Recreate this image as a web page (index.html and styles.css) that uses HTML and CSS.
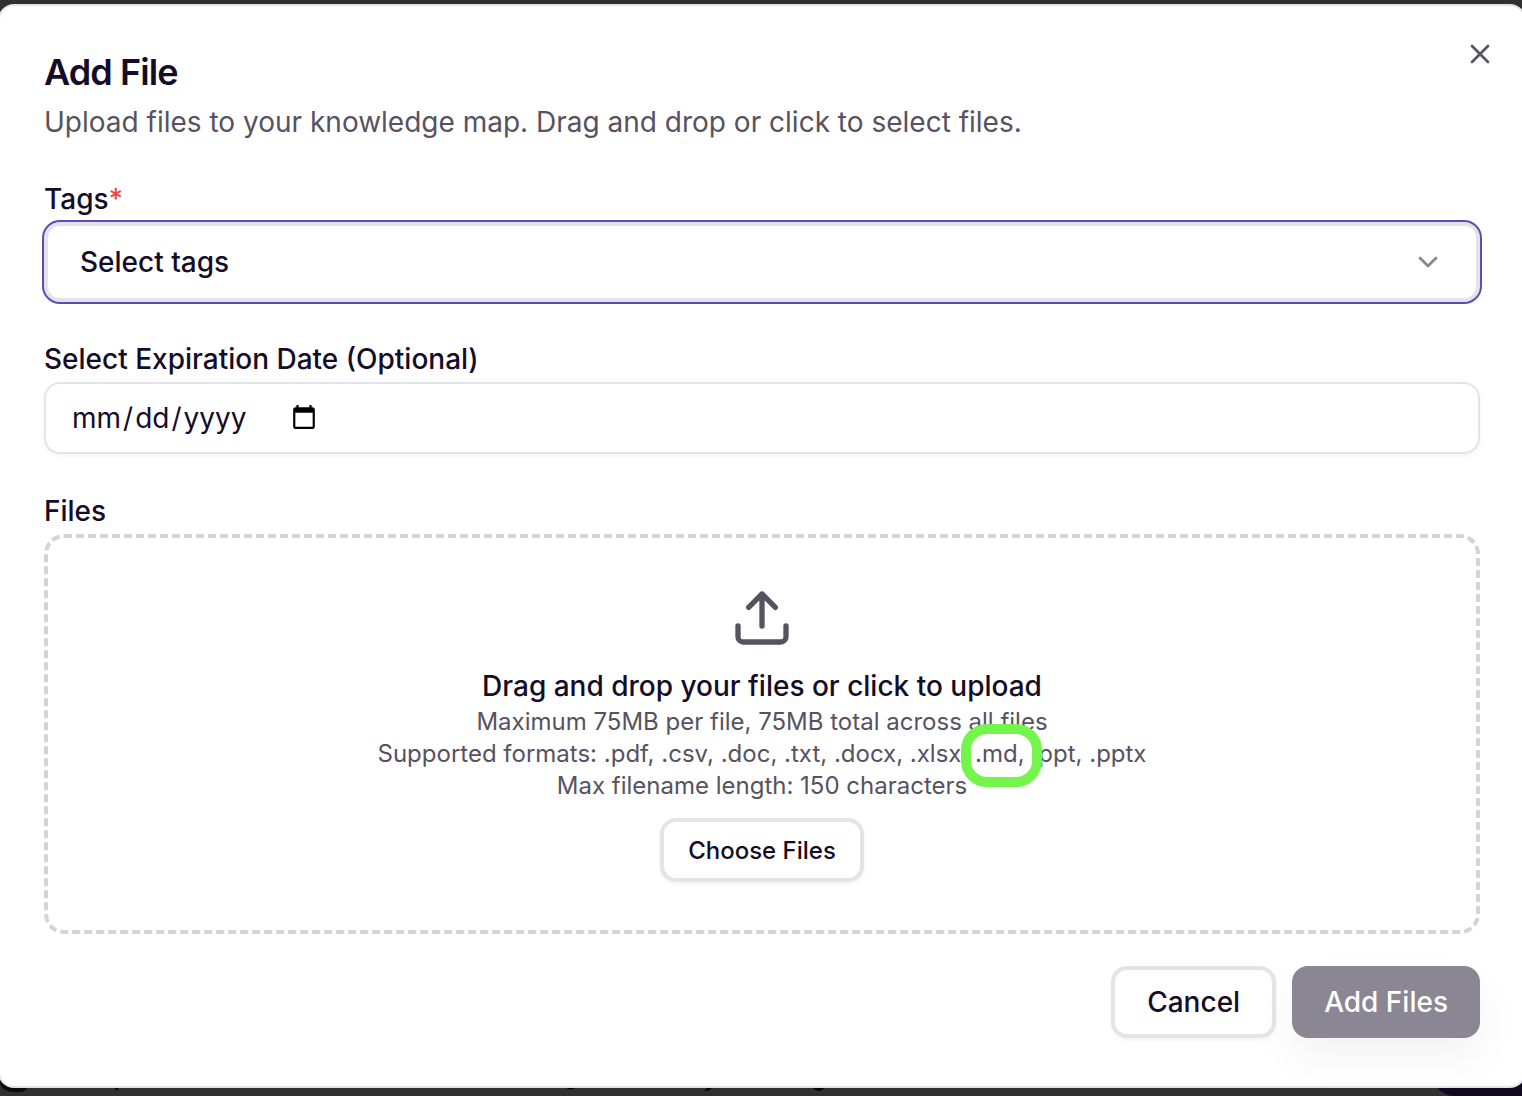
FILE: index.html
```html
<!DOCTYPE html>
<html lang="en">
<head>
  <meta charset="UTF-8">
  <meta name="viewport" content="width=device-width, initial-scale=1">
  <title>Add File</title>
  <link rel="stylesheet" href="styles.css">
</head>
<body>

  <!-- dimmed page behind the dialog -->
  <div class="backdrop" aria-hidden="true">
    <svg class="backdrop-marks" width="1000" height="30" viewBox="0 0 1000 30">
      <path d="M0 0v14q4 8 13 8h7q5 0 7-4z" fill="#0b0c10"/>
      <path d="M115 17h3v3h-3zM565 17q6 5 11 0zM705 21q6 0 8-5l-5-1zM812 17q7 8 13 0z" fill="#050505"/>
    </svg>
    <span class="backdrop-button"></span>
  </div>

  <main class="dialog" role="dialog" aria-labelledby="dialogTitle">
    <button type="button" class="close" aria-label="Close">
      <svg class="icon" viewBox="0 0 24 24"><path d="M18 6 6 18M6 6l12 12"/></svg>
    </button>

    <header class="header">
      <h1 class="title" id="dialogTitle">Add File</h1>
      <p class="description">Upload files to your knowledge map. Drag and drop or click to select files.</p>
    </header>

    <form class="form">
      <div class="field">
        <label class="label" for="tags">Tags<span class="required">*</span></label>
        <div class="select-wrap">
          <select class="select" id="tags">
            <option>Select tags</option>
          </select>
          <svg class="icon chevron" viewBox="0 0 24 24"><path d="m6 9 6 6 6-6"/></svg>
        </div>
      </div>

      <div class="field">
        <label class="label" for="expiration">Select Expiration Date (Optional)</label>
        <input class="date" type="date" id="expiration">
      </div>

      <div class="field">
        <label class="label" for="chooseFiles">Files</label>
        <div class="dropzone">
          <svg class="icon upload" viewBox="0 0 24 24">
            <path d="M21 15v4a2 2 0 0 1-2 2H5a2 2 0 0 1-2-2v-4"/>
            <path d="m17 8-5-5-5 5M12 3v12"/>
          </svg>
          <p class="drop-title">Drag and drop your files or click to upload</p>
          <p class="hint">Maximum 75MB per file, 75MB total across all files</p>
          <p class="hint">Supported formats: .pdf, .csv, .doc, .txt, .docx, .xlsx, <span class="marked">.md,</span> .ppt, .pptx</p>
          <p class="hint">Max filename length: 150 characters</p>
          <button type="button" class="button button-small" id="chooseFiles">Choose Files</button>
        </div>
      </div>

      <footer class="footer">
        <button type="button" class="button">Cancel</button>
        <button type="submit" class="button button-primary" disabled>Add Files</button>
      </footer>
    </form>
  </main>

</body>
</html>
```

FILE: styles.css
```css
* {
  box-sizing: border-box;
}

body {
  margin: 0;
  padding: 4px 0 8px;
  background-color: #303030;
  color: #150c27;
  font-family: Inter, sans-serif;
  font-size: 28px;
  overflow-x: hidden;
}

h1,
p {
  margin: 0;
}

button,
input,
select {
  font: inherit;
  color: inherit;
}

.backdrop {
  position: absolute;
  left: 0;
  right: 0;
  top: 1070px;
  height: 26px;
  overflow: hidden;
}

.backdrop-marks {
  position: absolute;
  left: 0;
  top: 0;
}

.backdrop-button {
  position: absolute;
  right: -20px;
  bottom: 0;
  width: 108px;
  height: 60px;
  border-radius: 0 0 0 20px;
  background-color: #0f0a20;
}

.dialog {
  position: relative;
  margin: 0 -4px 0 -2px;
  padding: 48px 44px;
  background-color: #fff;
  border: 2px solid #e4e3ea;
  border-radius: 16px;
}

.icon {
  display: block;
  width: 32px;
  height: 32px;
  fill: none;
  stroke: #565261;
  stroke-width: 2;
  stroke-linecap: round;
  stroke-linejoin: round;
}

.close {
  position: absolute;
  top: 32px;
  right: 28px;
  padding: 0;
  border: none;
  background: none;
}

.header {
  display: flex;
  flex-direction: column;
  gap: 12px;
  margin-bottom: 42px;
}

.title {
  font-size: 36px;
  font-weight: 600;
  line-height: 36px;
  letter-spacing: -0.025em;
}

.description {
  line-height: 40px;
  color: #565261;
}

.form {
  display: flex;
  flex-direction: column;
  gap: 42px;
}

.field {
  display: flex;
  flex-direction: column;
  gap: 8px;
}

.label {
  font-weight: 500;
  line-height: 30px;
}

.required {
  color: #ef4444;
}

.select-wrap {
  display: grid;
  align-items: center;
}

.select,
.chevron {
  grid-area: 1 / 1;
}

.select {
  appearance: none;
  width: 100%;
  height: 80px;
  padding: 0 32px;
  background-color: #fff;
  border: 4px solid #e4e3ea;
  border-radius: 16px;
  outline: 2px solid #5f4bb6;
  font-weight: 500;
}

.chevron {
  justify-self: end;
  margin-right: 36px;
  opacity: 0.7;
  pointer-events: none;
}

.date {
  width: 100%;
  height: 72px;
  padding: 8px 24px;
  background-color: #fff;
  border: 2px solid #e4e3ea;
  border-radius: 16px;
  box-shadow: 0 2px 4px rgba(0, 0, 0, 0.05);
}

/* keep the calendar icon next to the text */
.date::-webkit-datetime-edit {
  flex: none;
}

.date::-webkit-datetime-edit-month-field,
.date::-webkit-datetime-edit-day-field,
.date::-webkit-datetime-edit-year-field {
  padding: 0 2px;
}

.date::-webkit-calendar-picker-indicator {
  margin-left: 8px;
}

.dropzone {
  display: flex;
  flex-direction: column;
  align-items: center;
  padding: 48px;
  border: 4px dashed #d4d4d4;
  border-radius: 20px;
  text-align: center;
}

.upload {
  width: 64px;
  height: 64px;
  margin-bottom: 16px;
}

.drop-title {
  font-weight: 500;
  line-height: 40px;
}

.hint {
  font-size: 24px;
  line-height: 32px;
  color: #565261;
}

.marked {
  position: relative;
}

.marked::after {
  content: "";
  position: absolute;
  inset: -15px -17px -19px -14px;
  border: 10px solid #73f54b;
  border-radius: 26px;
}

.button {
  height: 72px;
  padding: 0 32px;
  background-color: #fff;
  border: 4px solid #e4e3ea;
  border-radius: 16px;
  box-shadow: 0 2px 4px rgba(0, 0, 0, 0.05);
  font-weight: 500;
}

.button-small {
  height: 64px;
  margin-top: 16px;
  padding: 0 24px;
  font-size: 24px;
}

.button-primary {
  border: none;
  background-color: #8b8693;
  box-shadow: 0 20px 40px rgba(0, 0, 0, 0.05);
  color: #fff;
}

.footer {
  display: flex;
  justify-content: flex-end;
  gap: 16px;
  margin-top: -10px;
}
```
